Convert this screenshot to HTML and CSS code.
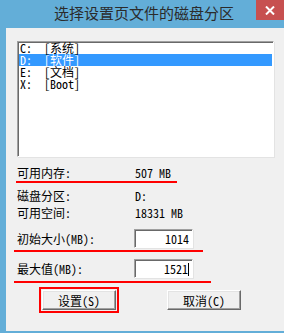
FILE: index.html
```html
<!DOCTYPE html>
<html lang="zh-CN">
<head>
  <meta charset="UTF-8" />
  <title>选择设置页文件的磁盘分区</title>
  <link rel="stylesheet" href="styles.css">
</head>
<body>
  <div class="window">
    <div class="titlebar">
      <span class="title">选择设置页文件的磁盘分区</span>
      <button class="close" title="关闭">
        <svg width="10" height="9" viewBox="0 0 10 9"><path d="M1 0.5 L9 8.5 M9 0.5 L1 8.5" stroke="#fff" stroke-width="2"/></svg>
      </button>
    </div>
    <div class="client">
      <ul class="drives">
        <li>C:  [系统]</li>
        <li class="selected">D:  [软件]</li>
        <li>E:  [文档]</li>
        <li>X:  [Boot]</li>
      </ul>

      <div class="row first"><span class="label">可用内存:</span><span>507 MB</span></div>
      <div class="mark mark-1"></div>
      <div class="row gap"><span class="label">磁盘分区:</span><span>D:</span></div>
      <div class="row"><span class="label">可用空间:</span><span>18331 MB</span></div>

      <div class="field-row"><span class="label">初始大小(MB):</span><span class="field">1014</span></div>
      <div class="mark mark-2"></div>
      <div class="field-row second"><span class="label">最大值(MB):</span><span class="field">1521<span class="caret"></span></span></div>
      <div class="mark mark-3"></div>

      <div class="actions">
        <div class="outline"><button class="btn">设置(S)</button></div>
        <button class="btn cancel">取消(C)</button>
      </div>
    </div>
  </div>
</body>
</html>
```

FILE: styles.css
```css
* {
  box-sizing: border-box;
}
body {
  margin: 0;
  font-family: "Noto Sans Mono CJK SC", "Noto Sans CJK SC", "Liberation Mono", monospace;
  font-size: 12px;
  color: #000;
}
.window {
  width: 284px;
  height: 333px;
  background: #63aed8;
  display: flex;
  flex-direction: column;
  overflow: hidden;
}
.titlebar {
  height: 28px;
  display: grid;
}
.title, .close {
  grid-area: 1 / 1;
}
.title {
  font-family: "Noto Sans CJK SC", sans-serif;
  font-size: 15px;
  line-height: 18px;
  color: #2b2b2b;
  text-align: center;
  padding: 4px 0 0 4px;
}
.close {
  justify-self: end;
  width: 28px;
  height: 20px;
  border: none;
  padding: 0;
  background: #c75050;
  display: flex;
  align-items: center;
  justify-content: center;
}
.client {
  flex: 1;
  margin: 0 0 2px 6px;
  background: #f0f0f0;
  padding: 13px 10px 0 11px;
}
.drives {
  list-style: none;
  margin: 0;
  padding: 0 1px;
  height: 116px;
  background: #fff;
  border: 1px solid;
  border-color: #a0a0a0 #fff #fff #a0a0a0;
  box-shadow: inset 1px 1px #696969, 1px 1px #e3e3e3;
}
.drives li {
  height: 12px;
  line-height: 12px;
  padding-left: 1px;
  white-space: pre;
}
.drives li.selected {
  background: #3399ff;
  color: #fff;
}
.row {
  display: flex;
  align-items: center;
  height: 17px;
}
.row.first {
  margin-top: 7px;
}
.row.gap {
  margin-top: 4px;
}
.label {
  width: 117px;
}
.row .label {
  width: 118px;
}
.mark {
  height: 2px;
  background: #f00;
}
.mark-1 {
  width: 161px;
  margin-left: -1px;
}
.mark-2 {
  width: 189px;
  margin: 2px 0 0 -3px;
}
.mark-3 {
  width: 197px;
  margin: 3px 0 0 -3px;
}
.field-row {
  display: flex;
  align-items: center;
  height: 19px;
  margin-top: 8px;
}
.field-row.second {
  margin-top: 7px;
}
.field {
  width: 59px;
  height: 19px;
  line-height: 17px;
  text-align: right;
  padding-right: 3px;
  background: #fff;
  border: 1px solid;
  border-color: #a0a0a0 #fff #fff #a0a0a0;
  box-shadow: inset 1px 1px #696969, 1px 1px #e3e3e3;
}
.caret {
  display: inline-block;
  width: 1px;
  height: 13px;
  background: #000;
  vertical-align: -2px;
}
.actions {
  display: flex;
  align-items: center;
  margin: 4px 0 0 22px;
  gap: 48px;
}
.outline {
  border: 2px solid #f00;
  padding: 1px;
}
.btn {
  width: 74px;
  height: 20px;
  font: inherit;
  padding: 0;
  background: #f0f0f0;
  border: 1px solid;
  border-color: #fff #696969 #696969 #fff;
  box-shadow: inset -1px -1px #a0a0a0, inset 1px 1px #e3e3e3;
}
```
